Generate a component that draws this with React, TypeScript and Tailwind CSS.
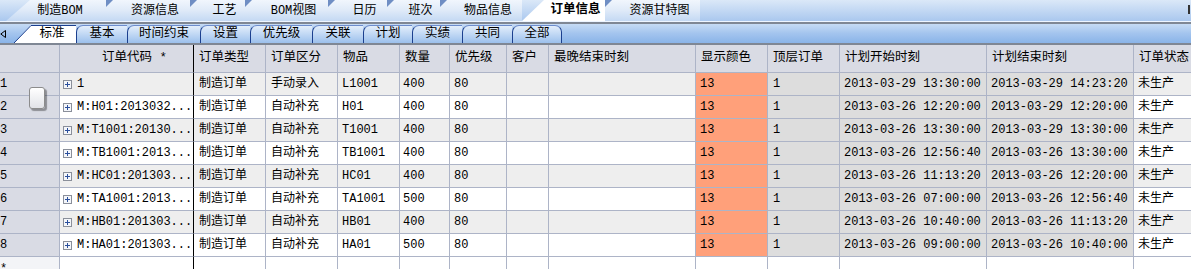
import { ReactNode } from "react"

/* ---------------------------------- */
/*             Data                   */
/* ---------------------------------- */

const TOP_TABS = [
  { label: "制造BOM", w: 106 },
  { label: "资源信息", w: 84 },
  { label: "工艺", w: 55 },
  { label: "BOM视图", w: 83 },
  { label: "日历", w: 59 },
  { label: "班次", w: 53 },
  { label: "物品信息", w: 82 },
  { label: "订单信息", w: 83, active: true },
  { label: "资源甘特图", w: 95 },
]

const SUB_TABS = [
  { label: "基本", w: 51 },
  { label: "时间约束", w: 73 },
  { label: "设置", w: 50 },
  { label: "优先级", w: 62 },
  { label: "关联", w: 51 },
  { label: "计划", w: 49 },
  { label: "实绩", w: 50 },
  { label: "共同", w: 50 },
  { label: "全部", w: 50 },
]

const HEADERS = [
  "",
  "订单代码 *",
  "订单类型",
  "订单区分",
  "物品",
  "数量",
  "优先级",
  "客户",
  "最晚结束时刻",
  "显示颜色",
  "顶层订单",
  "计划开始时刻",
  "计划结束时刻",
  "订单状态",
]

interface OrderRow {
  code: string
  kind: string
  item: string
  qty: string
  start: string
  end: string
}

const ROWS: OrderRow[] = [
  { code: "1", kind: "手动录入", item: "L1001", qty: "400", start: "2013-03-29 13:30:00", end: "2013-03-29 14:23:20" },
  { code: "M:H01:2013032...", kind: "自动补充", item: "H01", qty: "400", start: "2013-03-26 12:20:00", end: "2013-03-29 12:20:00" },
  { code: "M:T1001:20130...", kind: "自动补充", item: "T1001", qty: "400", start: "2013-03-26 13:30:00", end: "2013-03-29 13:30:00" },
  { code: "M:TB1001:2013...", kind: "自动补充", item: "TB1001", qty: "400", start: "2013-03-26 12:56:40", end: "2013-03-26 13:30:00" },
  { code: "M:HC01:201303...", kind: "自动补充", item: "HC01", qty: "400", start: "2013-03-26 11:13:20", end: "2013-03-26 12:20:00" },
  { code: "M:TA1001:2013...", kind: "自动补充", item: "TA1001", qty: "500", start: "2013-03-26 07:00:00", end: "2013-03-26 12:56:40" },
  { code: "M:HB01:201303...", kind: "自动补充", item: "HB01", qty: "400", start: "2013-03-26 10:40:00", end: "2013-03-26 11:13:20" },
  { code: "M:HA01:201303...", kind: "自动补充", item: "HA01", qty: "500", start: "2013-03-26 09:00:00", end: "2013-03-26 10:40:00" },
]

const GRID =
  "grid grid-cols-[60px_134px_72px_72px_62px_50px_57px_42px_147px_72px_72px_147px_147px_60px]"

/* ---------------------------------- */
/*           Pieces                   */
/* ---------------------------------- */

function Cell({
  children,
  col,
  className = "",
}: {
  children?: ReactNode
  col: number
  className?: string
}) {
  const right = col === 1 ? "border-r-black" : "border-r-[#adb4c7]"
  return (
    <div
      className={`flex items-center overflow-hidden whitespace-nowrap border-r border-b border-b-[#adb4c7] ${right} ${className}`}
    >
      {children}
    </div>
  )
}

function PlusBox() {
  return (
    <svg width="9" height="9" viewBox="0 0 9 9" className="shrink-0">
      <rect x="0.5" y="0.5" width="8" height="8" fill="#f4f6fa" stroke="#8a8f9a" />
      <path d="M2 4.5h5M4.5 2v5" stroke="#2b4f9c" strokeWidth="1" />
    </svg>
  )
}

function TopTab({ label, w, active, first }: { label: string; w: number; active?: boolean; first?: boolean }) {
  if (active) {
    return (
      <div className="relative h-full shrink-0" style={{ width: w }}>
        <svg className="absolute inset-0" width={w} height="21" viewBox={`0 0 ${w} 21`}>
          <polygon points={`0,21 22,0 ${w},0 ${w},21`} fill="#ffffff" />
        </svg>
        <div className="relative flex h-full items-center justify-center pl-[24px] font-bold text-[12.5px] text-black">
          {label}
        </div>
      </div>
    )
  }
  return (
    <div
      className={`relative h-full shrink-0 bg-gradient-to-b from-[#f1f6fd] via-[#dfeaf8] to-[#c4d9f3] ${
        first ? "[clip-path:polygon(30px_0,100%_0,100%_100%,6px_100%)]" : ""
      }`}
      style={{ width: w }}
    >
      {!first && (
        <svg className="absolute left-0 top-0" width="7" height="7" viewBox="0 0 7 7">
          <polygon points="0,0 7,0 0,7" fill="#6f8ec4" />
        </svg>
      )}
      <div className="flex h-full items-center justify-center pl-[14px] text-[12px] text-black">{label}</div>
    </div>
  )
}

/* ---------------------------------- */
/*            Component               */
/* ---------------------------------- */

export default function App() {
  return (
    <div className="relative w-[1191px] h-[269px] overflow-hidden bg-white font-['Liberation_Mono','Noto_Sans_CJK_SC',monospace] text-[12px] text-black">
      {/* main tabs */}
      <div className="flex h-[22px] border-b border-b-[#eef5ff] bg-gradient-to-b from-[#dbe8f8] to-[#aac8ee]">
        {TOP_TABS.map((t, i) => (
          <TopTab key={t.label} {...t} first={i === 0} />
        ))}
        <div className="ml-auto mr-[1px] mt-[5px] h-[9px] w-[2px] bg-[#333]" />
      </div>
      <div className="h-[2px] bg-[#7f8794]" />

      {/* sub tabs */}
      <div className="flex h-[19px] items-end bg-gradient-to-b from-[#c6dbf4] via-[#a3c4ee] to-[#8ab4e8]">
        <div className="flex h-full w-[14px] shrink-0 items-center">
          <svg width="6" height="8" viewBox="0 0 6 8">
            <path d="M5.5 0.5L0.8 4l4.7 3.5z" fill="none" stroke="#000" strokeWidth="1" />
          </svg>
        </div>
        <div className="relative h-[18px] w-[62px] shrink-0">
          <svg className="absolute inset-0" width="62" height="18" viewBox="0 0 62 18">
            <polygon points="0,18 17,0 62,0 62,18" fill="#ffffff" />
            <path d="M0 18L17 0.5H62" fill="none" stroke="#1b3f8e" strokeWidth="1" />
          </svg>
          <div className="relative flex h-full items-center justify-center pl-[14px] text-[12.5px]">标准</div>
        </div>
        {SUB_TABS.map((t, i) => (
          <div
            key={t.label}
            className={`flex h-[18px] shrink-0 items-center justify-center rounded-tl-[7px] border-l border-t border-l-[#1b3f8e] border-t-[#6d8ccc] bg-gradient-to-b from-[#e3eefb] to-[#9cc0ec] text-[12.5px] ${
              i === SUB_TABS.length - 1 ? "rounded-tr-[7px] border-r border-r-[#1b3f8e]" : ""
            }`}
            style={{ width: t.w }}
          >
            {t.label}
          </div>
        ))}
      </div>
      <div className="h-[2px] bg-[#7f8794]" />

      {/* header */}
      <div className={`${GRID} h-[28px] bg-[#d9dbe4]`}>
        {HEADERS.map((h, i) => (
          <Cell key={i} col={i} className={`text-[12.5px] ${i === 1 ? "pl-[42px]" : "pl-[5px]"}`}>
            {h}
          </Cell>
        ))}
      </div>

      {/* rows */}
      {ROWS.map((r, idx) => {
        const bg = idx % 2 === 0 ? "bg-[#eeeeee]" : "bg-white"
        return (
          <div key={idx} className={`${GRID} h-[23px]`}>
            <Cell col={0} className="bg-[#d9dbe4]">
              <span>{idx + 1}</span>
            </Cell>
            <Cell col={1} className={`${bg} gap-[5px] pl-[3px]`}>
              <PlusBox />
              <span>{r.code}</span>
            </Cell>
            <Cell col={2} className={`${bg} pl-[5px]`}>制造订单</Cell>
            <Cell col={3} className={`${bg} pl-[5px]`}>{r.kind}</Cell>
            <Cell col={4} className={`${bg} pl-[4px]`}>{r.item}</Cell>
            <Cell col={5} className={`${bg} pl-[3px]`}>{r.qty}</Cell>
            <Cell col={6} className={`${bg} pl-[4px]`}>80</Cell>
            <Cell col={7} className={bg} />
            <Cell col={8} className={bg} />
            <Cell col={9} className="bg-[#ffa07a] pl-[4px]">13</Cell>
            <Cell col={10} className="bg-[#dddddd] pl-[5px]">1</Cell>
            <Cell col={11} className="bg-[#dddddd] pl-[4px]">{r.start}</Cell>
            <Cell col={12} className="bg-[#dddddd] pl-[4px]">{r.end}</Cell>
            <Cell col={13} className={`${bg} pl-[4px]`}>未生产</Cell>
          </div>
        )
      })}

      {/* new row */}
      <div className={`${GRID} h-[23px]`}>
        <Cell col={0} className="items-start bg-[#f3f4f7] pt-[3px]">
          <span>*</span>
        </Cell>
        {HEADERS.slice(1).map((_, i) => (
          <Cell key={i} col={i + 1} className="bg-white" />
        ))}
      </div>

      {/* floating handle */}
      <div className="absolute left-[29px] top-[87px] h-[22px] w-[16px] rounded-[3px] border border-[#8c8c8c] bg-gradient-to-b from-white to-[#e2e3e8] shadow-[2px_2px_1px_rgba(0,0,0,0.35)]" />
    </div>
  )
}
